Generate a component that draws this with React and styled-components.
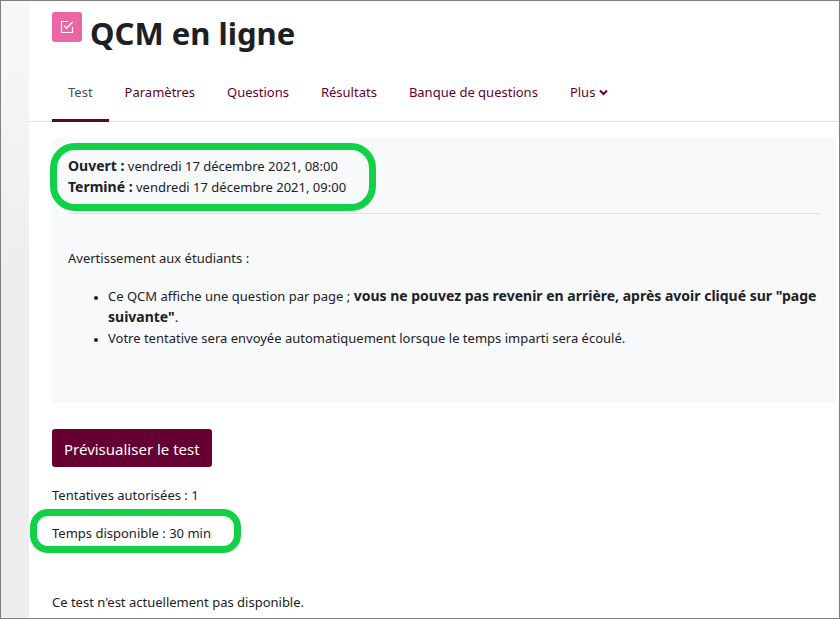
import React from 'react';
import styled, { createGlobalStyle, css } from 'styled-components';

const colors = {
  primary: '#660030',
  text: '#1d2125',
  muted: '#495057',
  line: '#dee2e6',
  panel: '#f8f9fb',
  icon: '#eb66a2',
  highlight: '#11d246',
  frame: '#808080'
};

const GlobalStyle = createGlobalStyle`
  *, *::before, *::after {
    box-sizing: border-box;
  }

  body {
    margin: 0;
    color: ${colors.text};
    background: #fff;
    font-family: 'Noto Sans', 'Open Sans', sans-serif;
    font-size: 13px;
    line-height: 21px;
  }
`;

const Page = styled.div`
  display: grid;
  grid-template-columns: 28px minmax(0, 1fr);
  min-height: 100vh;
  border: 1px solid ${colors.frame};
`;

const Gutter = styled.div`
  background: linear-gradient(#f8f8f8, #eee 260px);
`;

const Main = styled.main`
  padding-bottom: 4px;
`;

const Header = styled.header`
  display: flex;
  align-items: flex-start;
  gap: 8px;
  padding: 11px 23px 0;
`;

const ActivityIcon = styled.span`
  display: flex;
  align-items: center;
  justify-content: center;
  width: 30px;
  height: 30px;
  border-radius: 3px;
  background: ${colors.icon};
`;

const Title = styled.h1`
  margin: 0;
  font-size: 31px;
  font-weight: 700;
  line-height: 42px;
`;

const Tabs = styled.nav`
  display: flex;
  margin-top: 8px;
  padding: 0 23px;
  border-bottom: 1px solid ${colors.line};
`;

const tabStyle = css`
  display: flex;
  align-items: center;
  gap: 4px;
  height: 60px;
  margin-bottom: -1px;
  padding: 3px 16px 0;
  border: 0;
  border-bottom: 3px solid
    ${({ $active }) => ($active ? colors.primary : 'transparent')};
  background: none;
  color: ${({ $active }) => ($active ? colors.muted : colors.primary)};
  font: inherit;
  text-decoration: none;
  white-space: nowrap;
`;

const Tab = styled.a`
  ${tabStyle}
`;

const MoreButton = styled.button`
  ${tabStyle}
  cursor: pointer;
`;

const Panel = styled.section`
  margin: 16px 3px 0 23px;
  padding: 18px 16px 54px;
  border-radius: 4px;
  background: ${colors.panel};
`;

const Divider = styled.hr`
  margin: 15px 0 34px;
  border: 0;
  border-top: 1px solid ${colors.line};
`;

// Marker ring drawn around a block without taking room in the flow
const Highlighted = styled.div`
  position: relative;
  width: fit-content;

  &::after {
    content: '';
    position: absolute;
    inset: ${({ $inset }) => $inset};
    border: 7px solid ${colors.highlight};
    border-radius: ${({ $radius }) => $radius};
    pointer-events: none;
  }
`;

const Text = styled.p`
  margin: 0;
`;

const Strong = styled.strong`
  font-size: 14px;
  font-weight: 700;
  line-height: 1;
`;

const List = styled.ul`
  margin: 17px 0 0;
  padding-left: 40px;

  li::marker {
    font-size: 10px;
  }
`;

const Info = styled.section`
  display: flex;
  flex-direction: column;
  align-items: flex-start;
  gap: 17px;
  padding: 26px 23px 0;
`;

const PreviewButton = styled.button`
  height: 38px;
  margin-bottom: 1px;
  padding: 2px 12px 0;
  border: 0;
  border-radius: 3px;
  background: ${colors.primary};
  color: #fff;
  font: inherit;
  font-size: 15px;
  cursor: pointer;
`;

const Notice = styled(Text)`
  margin-top: 31px;
`;

const tabs = [
  { label: 'Test', active: true },
  { label: 'Paramètres' },
  { label: 'Questions' },
  { label: 'Résultats' },
  { label: 'Banque de questions' }
];

const QuizIcon = () => (
  <svg width='14' height='14' viewBox='0 0 14 14' fill='none' stroke='#fff' aria-hidden='true'>
    <path d='M8 1.5H1.5v11h11V7' strokeWidth='1.2' />
    <path d='M4.3 5.6L6.7 8.2L12.6 1.9' strokeWidth='1.4' />
  </svg>
);

const Chevron = () => (
  <svg width='9' height='7' viewBox='0 0 9 7' fill='none' stroke='currentColor' aria-hidden='true'>
    <path d='M1 1.5L4.5 5L8 1.5' strokeWidth='2' />
  </svg>
);

const App = () => (
  <>
    <GlobalStyle />
    <Page>
      <Gutter />
      <Main>
        <Header>
          <ActivityIcon>
            <QuizIcon />
          </ActivityIcon>
          <Title>QCM en ligne</Title>
        </Header>

        <Tabs>
          {tabs.map(({ label, active }) => (
            <Tab
              key={label}
              href='#'
              $active={active}
              aria-current={active ? 'page' : undefined}
            >
              {label}
            </Tab>
          ))}
          <MoreButton type='button' aria-haspopup='true'>
            Plus <Chevron />
          </MoreButton>
        </Tabs>

        <Panel>
          <Highlighted $inset='-13px -30px -13px -18px' $radius='25px'>
            <Text>
              <Strong>Ouvert :</Strong> vendredi 17 décembre 2021, 08:00
            </Text>
            <Text>
              <Strong>Terminé :</Strong> vendredi 17 décembre 2021, 09:00
            </Text>
          </Highlighted>
          <Divider />
          <Text>Avertissement aux étudiants :</Text>
          <List>
            <li>
              Ce QCM affiche une question par page ;{' '}
              <Strong>
                vous ne pouvez pas revenir en arrière, après avoir cliqué sur
                "page suivante"
              </Strong>
              .
            </li>
            <li>
              Votre tentative sera envoyée automatiquement lorsque le temps
              imparti sera écoulé.
            </li>
          </List>
        </Panel>

        <Info>
          <PreviewButton type='button'>Prévisualiser le test</PreviewButton>
          <Text>Tentatives autorisées : 1</Text>
          <Highlighted $inset='-14px -30px -9px -22px' $radius='18px'>
            <Text>Temps disponible : 30 min</Text>
          </Highlighted>
          <Notice>Ce test n'est actuellement pas disponible.</Notice>
        </Info>
      </Main>
    </Page>
  </>
);

export default App;
